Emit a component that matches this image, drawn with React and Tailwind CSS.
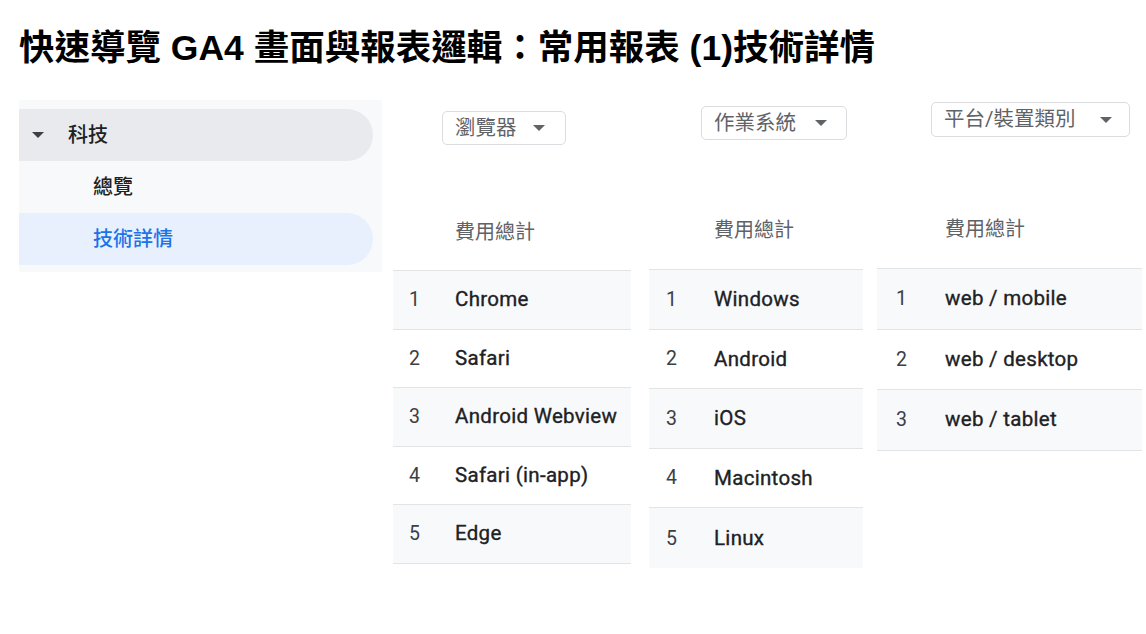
import React from 'react';

const cols = [
  {
    label: '瀏覽器',
    width: 'w-[238px]',
    dropTop: 'mt-[111px]',
    dropLeft: 'ml-[49px]',
    dropBox: 'w-[124px] h-[34px] pl-3 pr-[20px]',
    head: 'h-[125px] pl-[62px]',
    headPad: 'pt-[72px]',
    numLeft: 'pl-[16px] w-[62px]',
    rowH: 'h-[58.5px]',
    rows: ['Chrome', 'Safari', 'Android Webview', 'Safari (in-app)', 'Edge'],
  },
  {
    label: '作業系統',
    width: 'w-[214px]',
    dropTop: 'mt-[106px]',
    dropLeft: 'ml-[52px]',
    dropBox: 'w-[146px] h-[34px] pl-3 pr-[19px]',
    head: 'h-[129px] pl-[65px]',
    headPad: 'pt-[75px]',
    numLeft: 'pl-[17px] w-[65px]',
    rowH: 'h-[59.6px]',
    rows: ['Windows', 'Android', 'iOS', 'Macintosh', 'Linux'],
  },
  {
    label: '平台/裝置類別',
    width: 'w-[265px]',
    dropTop: 'mt-[102px]',
    dropLeft: 'ml-[54px]',
    dropBox: 'w-[199px] h-[35px] pl-3 pr-[17px]',
    head: 'h-[131px] pl-[68px]',
    headPad: 'pt-[77px]',
    numLeft: 'pl-[19px] w-[68px]',
    rowH: 'h-[60.5px]',
    rows: ['web / mobile', 'web / desktop', 'web / tablet'],
  },
];

function Caret({ className }) {
  return (
    <svg width="12" height="6" viewBox="0 0 12 6" className={className}>
      <path d="M0 0h12L6 6z" fill="currentColor" />
    </svg>
  );
}

function ReportColumn({ col }) {
  return (
    <div className={`${col.width} flex flex-col`}>
      <div className={`${col.dropTop} ${col.dropLeft} self-start`}>
        <div className={`${col.dropBox} flex items-center justify-between border border-[#dadce0] rounded-[5px] text-[20.5px] text-[#5f6368] bg-white`}>
          <span>{col.label}</span>
          <Caret className="text-[#5f6368]" />
        </div>
      </div>
      <div className={`${col.head} ${col.headPad} text-[20px] text-[#5f6368]`}>費用總計</div>
      <div className="border-t border-[#e3e4e6]">
        {col.rows.map((r, i) => (
          <div
            key={r}
            className={`${col.rowH} flex items-center ${i % 2 === 0 ? 'bg-[#f8f9fa]' : 'bg-white'} ${i === col.rows.length - 1 && col.label === '作業系統' ? '' : 'border-b border-[#e3e4e6]'}`}
          >
            <span className={`${col.numLeft} text-[19.5px] text-[#3c4043]`}>{i + 1}</span>
            <span className="text-[20.5px] tracking-[0.3px] text-[#202124] [-webkit-text-stroke:0.35px_#202124]">{r}</span>
          </div>
        ))}
      </div>
    </div>
  );
}

export default function App() {
  return (
    <div className="w-[1146px] h-[634px] bg-white overflow-hidden font-['Roboto','Noto_Sans_CJK_TC',sans-serif]">
      <h1 className="pl-[19px] pt-[27px] text-[35.5px] leading-[42px] font-bold text-black font-['Liberation_Sans','Noto_Sans_CJK_TC',sans-serif]">
        快速導覽 GA4 畫面與報表邏輯：常用報表 (1)技術詳情
      </h1>

      <div className="flex items-start">
        {/* side nav */}
        <div className="ml-[19px] mt-[31px] w-[363px] h-[172px] bg-[#f8f9fa] pt-[9px]">
          <div className="h-[52px] w-[354px] rounded-r-full bg-[#e8eaed] flex items-center">
            <Caret className="ml-[13px] text-[#3c4043]" />
            <span className="ml-[24px] text-[20px] text-[#202124] font-medium">科技</span>
          </div>
          <div className="h-[52px] flex items-center pl-[74px] text-[20px] text-[#202124] font-medium">總覽</div>
          <div className="h-[52px] w-[354px] rounded-r-full bg-[#e8f0fe] flex items-center pl-[74px] text-[20px] text-[#1a73e8] font-medium">
            技術詳情
          </div>
        </div>

        <div className="ml-[11px] -mt-[69px] flex items-start">
          <ReportColumn col={cols[0]} />
          <div className="ml-[18px]">
            <ReportColumn col={cols[1]} />
          </div>
          <div className="ml-[14px]">
            <ReportColumn col={cols[2]} />
          </div>
        </div>
      </div>
    </div>
  );
}
